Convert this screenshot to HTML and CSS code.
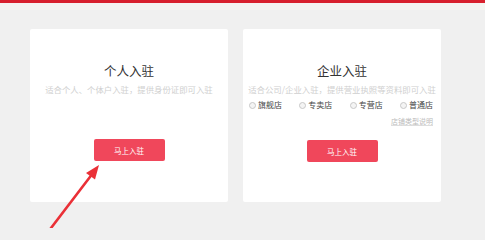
FILE: index.html
```html
<!DOCTYPE html>
<html lang="zh-CN">
<head>
<meta charset="utf-8">
<title>入驻</title>
<link rel="stylesheet" href="styles.css">
</head>
<body>
<div class="topbar"></div>
<div class="band"></div>
<main class="cards">
  <section class="card">
    <h2 class="title">个人入驻</h2>
    <p class="desc">适合个人、个体户入驻，提供身份证即可入驻</p>
    <a class="btn btn-personal">马上入驻</a>
  </section>
  <section class="card">
    <h2 class="title">企业入驻</h2>
    <p class="desc">适合公司/企业入驻，提供营业执照等资料即可入驻</p>
    <div class="radios">
      <label class="radio"><span class="dot"></span>旗舰店</label>
      <label class="radio"><span class="dot"></span>专卖店</label>
      <label class="radio"><span class="dot"></span>专营店</label>
      <label class="radio"><span class="dot"></span>普通店</label>
    </div>
    <div class="note"><a>店铺类型说明</a></div>
    <a class="btn btn-company">马上入驻</a>
  </section>
</main>
<svg class="arrow" width="485" height="228" viewBox="0 0 485 228">
  <line x1="48" y1="232" x2="93" y2="173" stroke="#ea3037" stroke-width="2.6" stroke-linecap="round"/>
  <polygon points="99,165 95,179.5 86,173" fill="#ea3037"/>
</svg>
</body>
</html>
```
FILE: styles.css
```css
html, body {
  margin: 0;
  padding: 0;
}
body {
  width: 485px;
  height: 228px;
  overflow: hidden;
  background: #f0f0f0;
  font-family: "Noto Sans CJK SC", "Noto Sans", sans-serif;
  position: relative;
}
.topbar {
  height: 3px;
  background: #d8212d;
}
.band {
  height: 7px;
  background: #f5f5f1;
}
.cards {
  display: flex;
  gap: 15px;
  padding: 19px 0 0 30px;
}
.card {
  width: 198px;
  height: 173px;
  background: #fff;
  border-radius: 2px;
  display: flex;
  flex-direction: column;
  align-items: center;
  box-sizing: border-box;
  padding-top: 34px;
}
.title {
  margin: 0;
  font-size: 12.5px;
  line-height: 16px;
  font-weight: 400;
  color: #333;
}
.desc {
  margin: 4px 0 0;
  font-size: 8.4px;
  line-height: 12px;
  color: #cfcfcf;
  white-space: nowrap;
}
.btn {
  display: flex;
  align-items: center;
  justify-content: center;
  width: 71px;
  height: 22px;
  background: #f0475b;
  border-radius: 2px;
  color: #fff;
  font-size: 7.5px;
}
.btn-personal {
  margin-top: 44px;
}
.btn-company {
  margin-top: 14px;
}
.radios {
  margin-top: 5px;
  align-self: stretch;
  display: flex;
  justify-content: space-between;
  padding: 0 8px 0 6px;
}
.radio {
  display: flex;
  align-items: center;
  gap: 1px;
  font-size: 8px;
  line-height: 10px;
  color: #444;
}
.dot {
  width: 5px;
  height: 5px;
  border: 1px solid #c8c8c8;
  border-radius: 50%;
  background: #f4f4f4;
  box-sizing: content-box;
  margin-right: 1px;
}
.note {
  margin-top: 6px;
  align-self: stretch;
  text-align: right;
  padding-right: 8px;
  font-size: 7px;
  line-height: 10px;
  color: #bbb;
}
.note a {
  text-decoration: underline;
  text-decoration-color: #ddd;
}
.arrow {
  position: absolute;
  left: 0;
  top: 0;
  pointer-events: none;
}
```
